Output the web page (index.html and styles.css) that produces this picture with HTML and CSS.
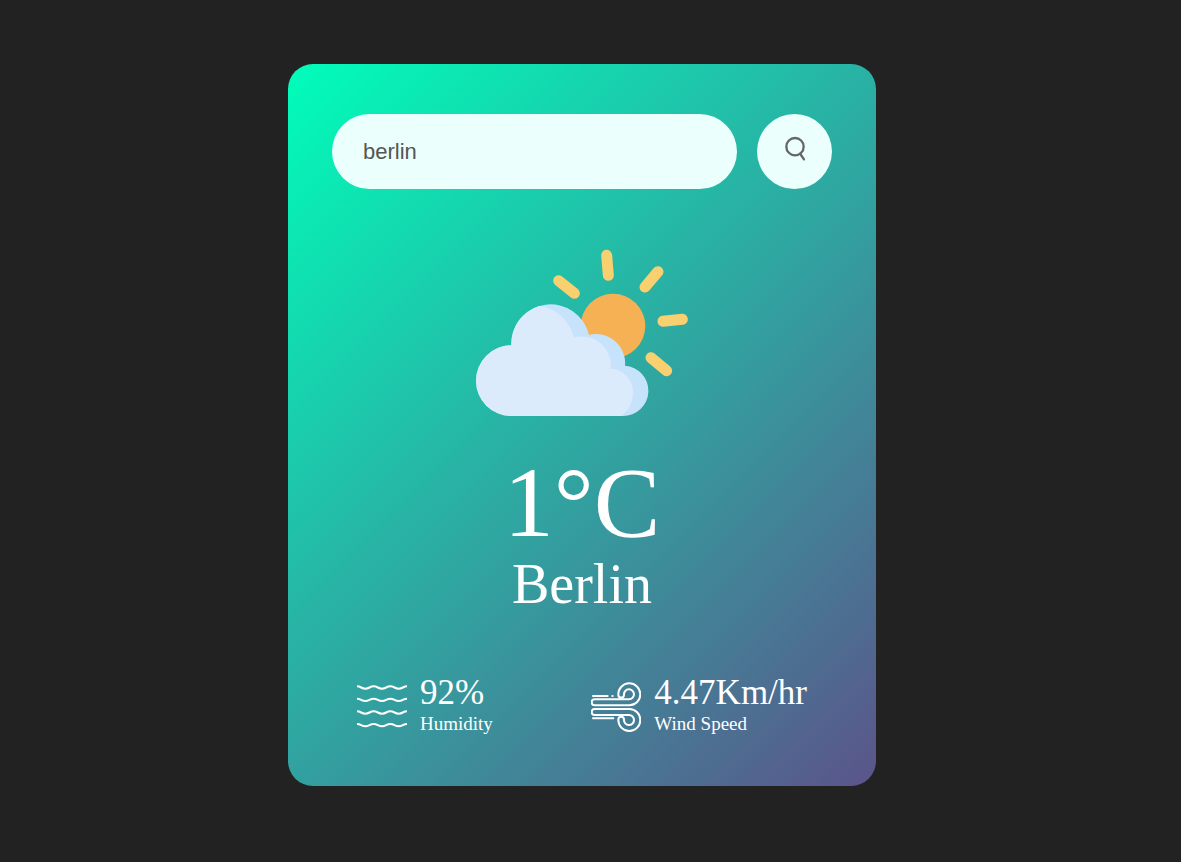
FILE: index.html
```html
<!DOCTYPE html>
<html lang="en">
<head>
<meta charset="utf-8">
<meta name="viewport" content="width=device-width, initial-scale=1">
<title>Weather App</title>
<link rel="stylesheet" href="styles.css">
</head>
<body>
<main class="card">
  <form class="search">
    <input class="search-input" type="text" value="berlin" placeholder="enter city name" aria-label="City name" spellcheck="false">
    <button class="search-button" type="button" aria-label="Search">
      <svg class="search-icon" viewBox="133 108 60 75" aria-hidden="true">
        <circle cx="163" cy="140" r="26"/>
        <path d="M179 162L190 178"/>
      </svg>
    </button>
  </form>
  <section class="weather">
    <svg class="weather-icon" viewBox="48 -24 636 636" role="img" aria-label="Partly cloudy">
      <path class="rays" d="M296 137L343 175M440 61L445 121M594 110L555 156M609 259L667 253M573 368L620 407"/>
      <circle class="sun" cx="459" cy="273" r="97"/>
      <path class="cloud-back" d="M154 543A106 106 0 0 1 154 331A118 118 0 0 1 387 300A87 87 0 0 1 495 392A75.6 75.6 0 0 1 489 543Z"/>
      <path class="cloud-front" d="M154 543A106 106 0 0 1 154 331A118 118 0 0 1 238 213A125 125 0 0 1 342 308A87 87 0 0 1 452 401A70 70 0 0 1 519 472A85 85 0 0 1 483 543Z"/>
    </svg>
    <h1 class="temp">1°C</h1>
    <h2 class="city">Berlin</h2>
    <div class="details">
      <div class="detail">
        <svg class="detail-icon" viewBox="51 52 150 150" aria-hidden="true">
          <path d="M51 65C63 65 64 72 76 72S89 65 101 65S114 72 126 72S139 65 151 65S164 72 176 72S189 65 201 65"/>
          <path d="M51 102C63 102 64 109 76 109S89 102 101 102S114 109 126 109S139 102 151 102S164 109 176 109S189 102 201 102"/>
          <path d="M51 140C63 140 64 147 76 147S89 140 101 140S114 147 126 147S139 140 151 140S164 147 176 147S189 140 201 140"/>
          <path d="M51 178C63 178 64 185 76 185S89 178 101 178S114 185 126 185S139 178 151 178S164 185 176 185S189 178 201 178"/>
        </svg>
        <div>
          <p class="value">92%</p>
          <p class="label">Humidity</p>
        </div>
      </div>
      <div class="detail">
        <svg class="detail-icon" viewBox="33 52 150 150" aria-hidden="true">
          <path d="M44 104H147A15 15 0 1 0 132 90A8 8 0 0 1 115 90A33 33 0 1 1 148 122H44A9 9 0 0 1 44 104Z"/>
          <path d="M44 151H147A15 15 0 1 1 132 165A8 8 0 0 0 115 165A33 33 0 1 0 148 133H44A9 9 0 0 0 44 151Z"/>
          <path d="M39 94H83M97 94H98M39 161H100"/>
        </svg>
        <div>
          <p class="value">4.47Km/hr</p>
          <p class="label">Wind Speed</p>
        </div>
      </div>
    </div>
  </section>
</main>
</body>
</html>
```
FILE: styles.css
```css
* {
  box-sizing: border-box;
  margin: 0;
  padding: 0;
}

body {
  min-height: 100vh;
  padding: 64px 17px 0 0;
  background: #222;
  font-family: "Liberation Serif", "Times New Roman", serif;
}

.card {
  width: 90%;
  max-width: 588px;
  margin: 0 auto;
  padding: 50px 44px 51px;
  border-radius: 25px;
  background: linear-gradient(135deg, #00feba, #5b548a);
  color: #fff;
}

.search {
  display: flex;
  gap: 20px;
}

.search-input {
  flex: 1;
  min-width: 0;
  height: 75px;
  padding: 12px 31px;
  border: 0;
  outline: 0;
  border-radius: 38px;
  background: #ebfffc;
  color: #555;
  font-family: "Liberation Sans", Arial, sans-serif;
  font-size: 22px;
}

.search-button {
  display: flex;
  align-items: center;
  justify-content: center;
  flex: none;
  width: 75px;
  height: 75px;
  padding-bottom: 6px;
  border: 0;
  border-radius: 50%;
  background: #ebfffc;
  cursor: pointer;
}

.search-icon {
  width: 20px;
  height: 25px;
  fill: none;
  stroke: #666;
  stroke-width: 7;
  stroke-linecap: round;
}

.weather {
  text-align: center;
}

.weather-icon {
  display: block;
  width: 212px;
  height: 212px;
  margin: 38px auto 12px;
}

.rays {
  stroke: #f9d070;
  stroke-width: 33;
  stroke-linecap: round;
}

.sun {
  fill: #f6b155;
}

.cloud-back {
  fill: #c7e2fb;
}

.cloud-front {
  fill: #dbebfc;
}

.temp {
  font-size: 100px;
  font-weight: 400;
  line-height: 104px;
}

.city {
  font-size: 56px;
  font-weight: 400;
  line-height: 58px;
}

.details {
  display: flex;
  justify-content: space-between;
  margin-top: 60px;
  padding: 0 25px;
}

.detail {
  display: flex;
  align-items: flex-end;
  gap: 13px;
  text-align: left;
}

.detail-icon {
  width: 50px;
  height: 50px;
  margin-bottom: 3px;
  fill: none;
  stroke: #fff;
  stroke-width: 6;
  stroke-linecap: round;
}

.value {
  font-size: 35px;
  line-height: 40px;
}

.label {
  font-size: 19px;
  line-height: 22px;
}
```
